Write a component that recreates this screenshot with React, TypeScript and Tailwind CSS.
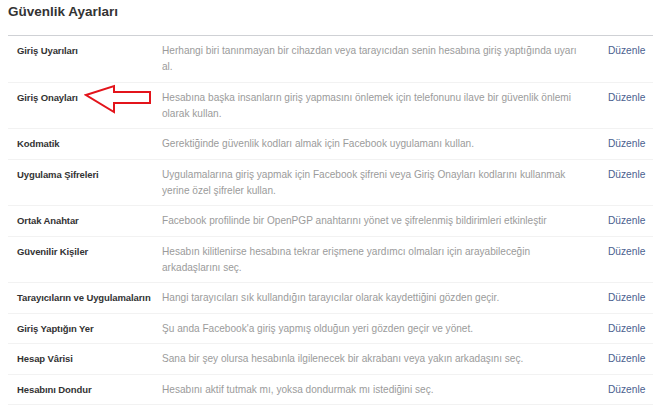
const rows: { label: string; lines: string[]; arrow?: boolean }[] = [
  {
    label: 'Giriş Uyarıları',
    lines: ['Herhangi biri tanınmayan bir cihazdan veya tarayıcıdan senin hesabına giriş yaptığında uyarı', 'al.'],
  },
  {
    label: 'Giriş Onayları',
    lines: ['Hesabına başka insanların giriş yapmasını önlemek için telefonunu ilave bir güvenlik önlemi', 'olarak kullan.'],
    arrow: true,
  },
  { label: 'Kodmatik', lines: ['Gerektiğinde güvenlik kodları almak için Facebook uygulamanı kullan.'] },
  {
    label: 'Uygulama Şifreleri',
    lines: ['Uygulamalarına giriş yapmak için Facebook şifreni veya Giriş Onayları kodlarını kullanmak', 'yerine özel şifreler kullan.'],
  },
  { label: 'Ortak Anahtar', lines: ['Facebook profilinde bir OpenPGP anahtarını yönet ve şifrelenmiş bildirimleri etkinleştir'] },
  {
    label: 'Güvenilir Kişiler',
    lines: ['Hesabın kilitlenirse hesabına tekrar erişmene yardımcı olmaları için arayabileceğin', 'arkadaşlarını seç.'],
  },
  { label: 'Tarayıcıların ve Uygulamaların', lines: ['Hangi tarayıcıları sık kullandığın tarayıcılar olarak kaydettiğini gözden geçir.'] },
  { label: 'Giriş Yaptığın Yer', lines: ["Şu anda Facebook'a giriş yapmış olduğun yeri gözden geçir ve yönet."] },
  { label: 'Hesap Vârisi', lines: ['Sana bir şey olursa hesabınla ilgilenecek bir akrabanı veya yakın arkadaşını seç.'] },
  { label: 'Hesabını Dondur', lines: ['Hesabını aktif tutmak mı, yoksa dondurmak mı istediğini seç.'] },
];

// red outlined arrow pointing at "Giriş Onayları"
function RedArrow() {
  return (
    <svg className="absolute left-[76px] top-[-6px]" width="68" height="30" viewBox="0 0 68 30">
      <path
        d="M2 11 L30 2 L30 8 L66 8 L66 19 L30 19 L30 28 Z"
        fill="white"
        stroke="#e3141b"
        strokeWidth="2"
      />
    </svg>
  );
}

export default function App() {
  return (
    <div className="w-[660px] h-[405px] bg-white overflow-hidden px-2 font-['Liberation_Sans',Arial,sans-serif]">
      <h1 className="pt-[2px] pb-[13px] text-[13.5px] font-bold text-[#333] leading-[20px]">Güvenlik Ayarları</h1>
      <div className="border-t border-[#cfd1d5] w-[645px]">
        {rows.map((row, i) => (
          <div key={i} className="flex border-b border-[#f2f2f2] pt-[7px] pb-[6.5px] leading-[16px]">
            <div className="relative w-[154px] shrink-0 pl-[9px] text-[9.5px] tracking-[-0.1px] font-bold text-[#333]">
              {row.label}
              {row.arrow && <RedArrow />}
            </div>
            <div className="w-[446px] shrink-0 text-[10.1px] text-[#9b9b9b]">
              {row.lines.map((line, j) => (
                <div key={j} className="whitespace-nowrap">
                  {line}
                </div>
              ))}
            </div>
            <div className="text-[10.2px] text-[#4b5f8f]">Düzenle</div>
          </div>
        ))}
      </div>
    </div>
  );
}
